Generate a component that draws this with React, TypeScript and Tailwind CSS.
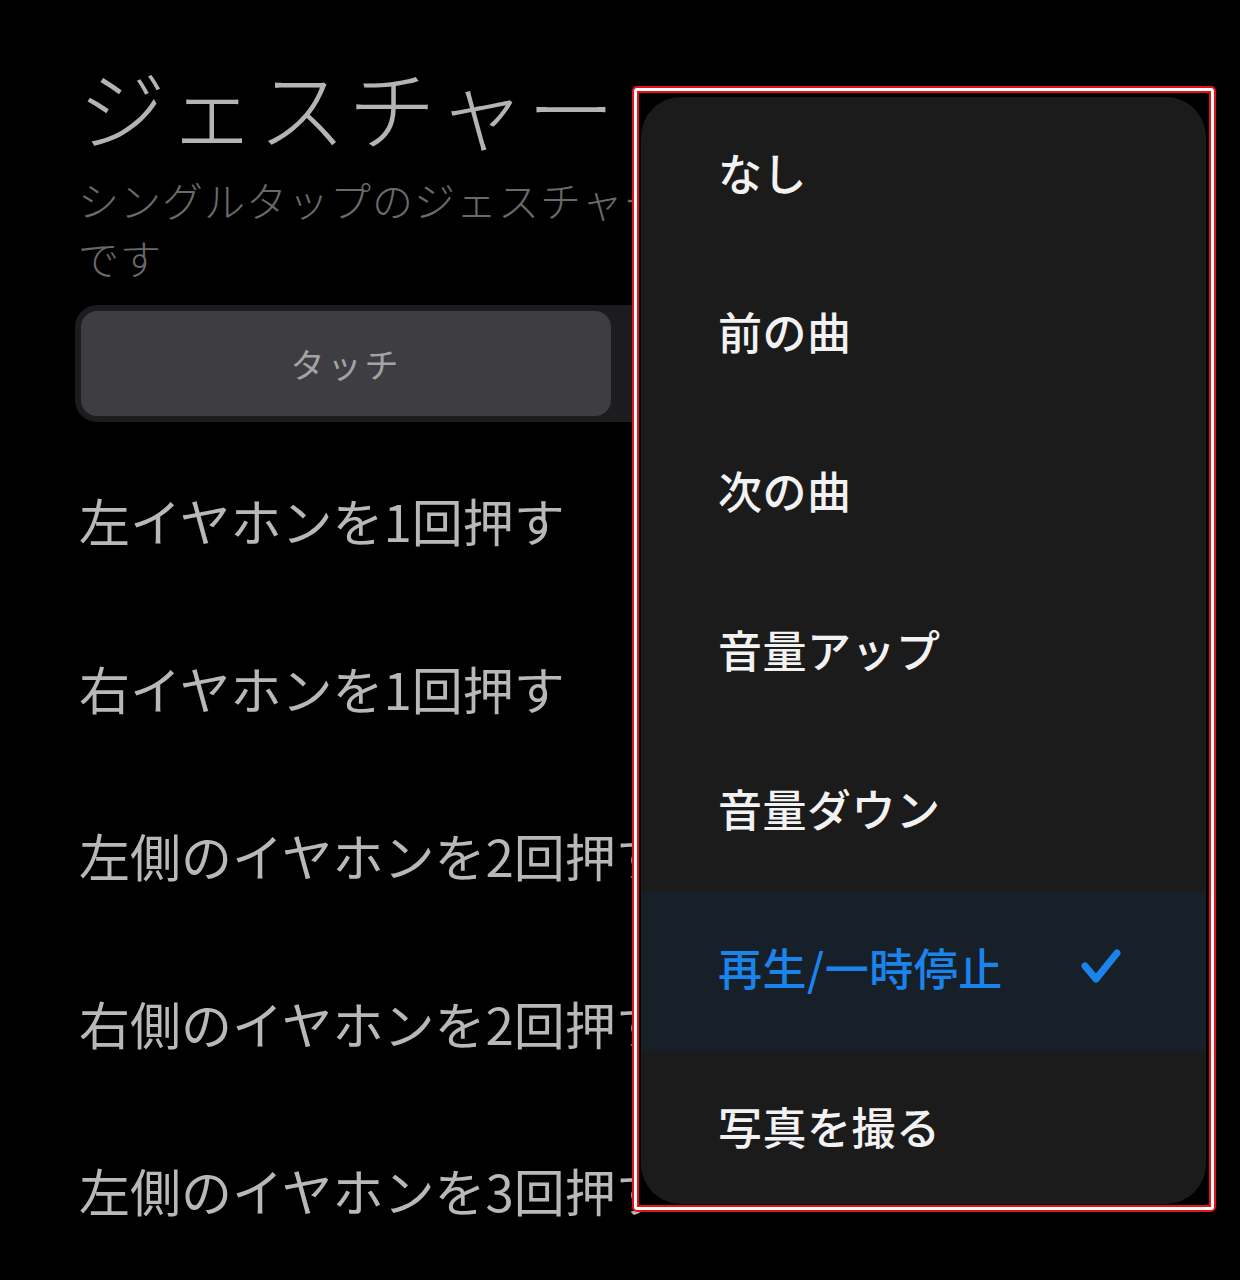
import React from "react";

const rows = [
  "左イヤホンを1回押す",
  "右イヤホンを1回押す",
  "左側のイヤホンを2回押す",
  "右側のイヤホンを2回押す",
  "左側のイヤホンを3回押す",
];

const options = ["なし", "前の曲", "次の曲", "音量アップ", "音量ダウン", "再生/一時停止", "写真を撮る"];

export default function App() {
  const selected = "再生/一時停止";

  return (
    <div className="relative min-h-[1280px] overflow-hidden bg-black font-['Noto_Sans_CJK_JP','Noto_Sans',sans-serif]">
      {/* settings page underneath */}
      <div className="pl-[75px] pr-[75px] pt-[55px]">
        <h1 className="pl-[3px] text-[88px] font-light leading-[100px] tracking-[2px] text-[#b4b4b4]">
          ジェスチャー
        </h1>
        <p className="mt-[15px] pl-[3px] text-[41px] font-light leading-[58px] tracking-[1px] text-[#6a6a6a]">
          シングルタップのジェスチャー
          <br />
          です
        </p>
        <div className="mt-[19px] flex h-[117px] w-[1090px] rounded-[22px] bg-[#1c1c1e] p-[6px]">
          <div className="flex w-[530px] items-center justify-center rounded-[16px] bg-[#3e3e42] text-[34px] tracking-[3px] text-[#a3a3a3]">
            タッチ
          </div>
          <div className="flex flex-1 items-center justify-center text-[34px] text-[#6a6a6a]">長押し</div>
        </div>
        <div className="mt-[15px] flex flex-col">
          {rows.map((r) => (
            <div key={r} className="flex h-[167.5px] items-center pl-[4px] text-[51px] leading-none text-[#b8b8b8]">
              {r}
            </div>
          ))}
        </div>
      </div>

      {/* highlighted dropdown menu */}
      <div className="absolute left-[632px] top-[86px] h-[1126px] w-[584px] rounded-[5px] border-2 border-[#e8101a]">
        <div className="h-full w-full rounded-[3px] border-[3px] border-white">
          <div className="h-full w-full border-2 border-[#e8101a] bg-black pb-[1px] pl-[2px] pr-[3px] pt-[4px]">
            <div className="flex h-full flex-col overflow-hidden rounded-[40px] bg-[#1b1b1c]">
              {options.map((o) => {
                const on = o === selected;
                return (
                  <div
                    key={o}
                    className={
                      on
                        ? "flex h-[159px] shrink-0 items-center justify-between bg-[#172029] pb-[9px] pl-[77px] pr-[82px]"
                        : "flex h-[159px] shrink-0 items-center pb-[9px] pl-[77px]"
                    }
                  >
                    <span
                      className={
                        on
                          ? "text-[44px] font-medium leading-none tracking-[0.5px] text-[#1a84ec]"
                          : "text-[44px] font-medium leading-none tracking-[0.5px] text-[#f2f2f2]"
                      }
                    >
                      {o}
                    </span>
                    {on && (
                      <svg width="44" height="40" viewBox="0 0 44 40" fill="none">
                        <path
                          d="M5 19 L16 32 L37 6"
                          stroke="#1a84ec"
                          strokeWidth="7"
                          strokeLinecap="round"
                          strokeLinejoin="round"
                        />
                      </svg>
                    )}
                  </div>
                );
              })}
            </div>
          </div>
        </div>
      </div>
    </div>
  );
}
